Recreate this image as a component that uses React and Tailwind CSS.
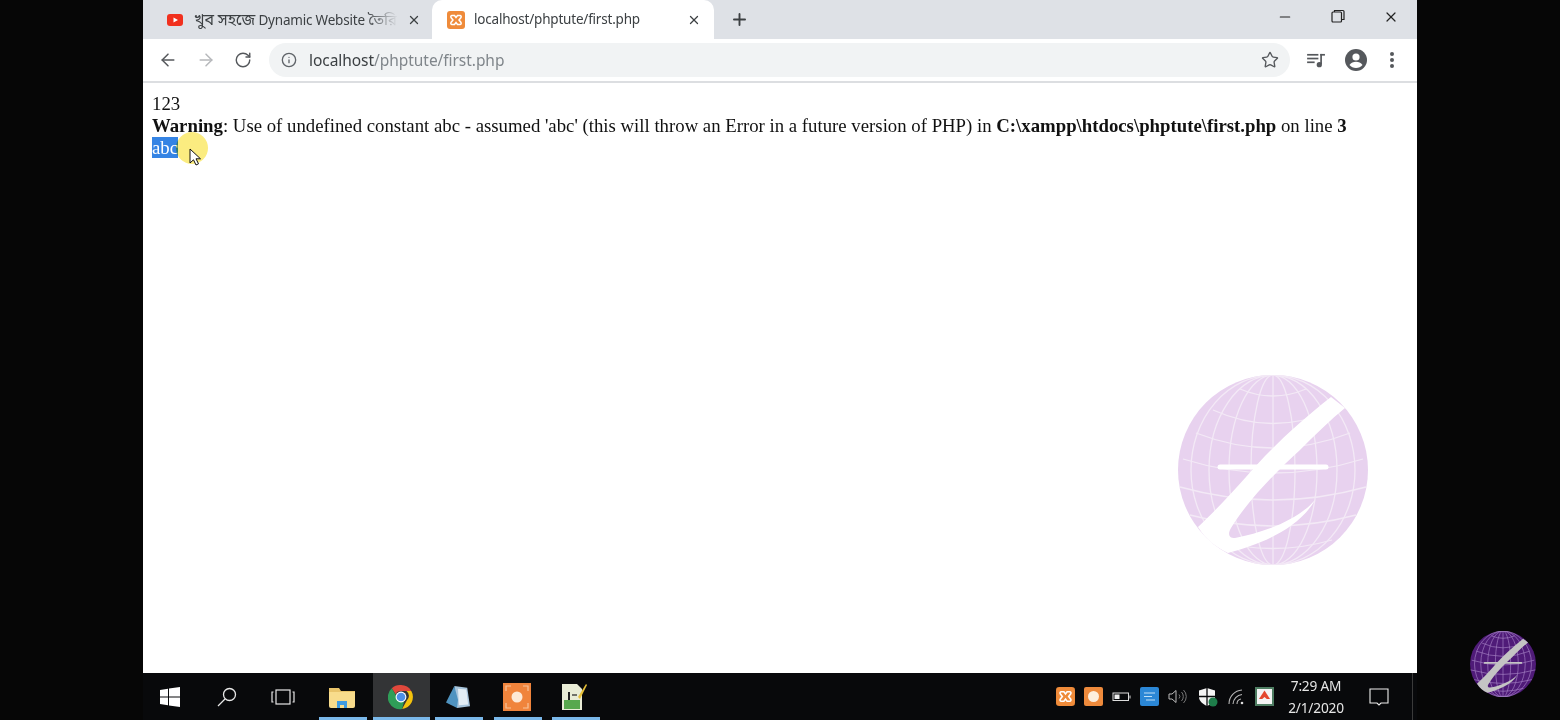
import React from "react";
import { ArrowLeft, ArrowRight, RotateCw, Info, Star, Plus, X, Minus } from "lucide-react";

function Globe({ base, line, swoosh, className, lineWidth }) {
  const parallels = [
    "M35,35 Q95,62 155,35",
    "M18,58 Q95,88 172,58",
    "M5,84 Q95,112 185,84",
    "M2,112 Q95,138 188,112",
    "M12,140 Q95,162 178,140",
    "M36,165 Q95,182 154,165",
    "M62,14 Q95,28 128,14",
  ];
  return (
    <svg viewBox="0 0 190 190" className={className}>
      <circle cx="95" cy="95" r="95" fill={base} />
      <g fill="none" stroke={line} strokeWidth={lineWidth}>
        <line x1="95" y1="0" x2="95" y2="190" />
        <ellipse cx="95" cy="95" rx="22" ry="95" />
        <ellipse cx="95" cy="95" rx="44" ry="95" />
        <ellipse cx="95" cy="95" rx="64" ry="95" />
        <ellipse cx="95" cy="95" rx="82" ry="95" />
        {parallels.map((d) => (
          <path key={d} d={d} />
        ))}
      </g>
      <path
        fill={swoosh}
        d="M153,22 C120,48 90,76 68,102 C50,122 35,138 20,152 C28,165 38,172 50,178 C80,170 120,155 137,125 C120,145 85,158 57,163 C50,163 50,158 53,153 C70,125 100,95 122,75 C137,60 152,45 167,33 Z"
      />
      <line x1="42" y1="92" x2="148" y2="92" stroke={swoosh} strokeWidth="5" strokeLinecap="round" />
    </svg>
  );
}

function Xampp({ className }) {
  return (
    <svg viewBox="0 0 18 18" className={className}>
      <rect width="18" height="18" rx="3" fill="#ef8b3a" />
      <path
        d="M5 4.500h2.500L9 6.500l1.500-2H13c1 0 1.500 1 1 2L12 9l2 2.500c.5 1 0 2-1 2h-2.500L9 11.500l-1.500 2H5c-1 0-1.500-1-1-2L6 9 4 6.500c-.5-1 0-2 1-2z"
        fill="none"
        stroke="#fff"
        strokeWidth="1.500"
      />
    </svg>
  );
}

function OrangeCam({ className }) {
  return (
    <svg viewBox="0 0 28 28" className={className}>
      <rect width="28" height="28" fill="#f0843c" />
      <circle cx="14" cy="14" r="5.500" fill="#fde9d6" />
      <path d="M3 8V3h5M20 3h5v5M25 20v5h-5M8 25H3v-5" fill="none" stroke="#f8c39a" strokeWidth="1.200" />
    </svg>
  );
}

function ChromeLogo({ className }) {
  return (
    <svg viewBox="0 0 48 48" className={className}>
      <path d="M24 2a22 22 0 0 1 19 11H24a11 11 0 0 0-10 6L7 8a22 22 0 0 1 17-6z" fill="#e0483c" />
      <path d="M43 13a22 22 0 0 1-17 33l9-16a11 11 0 0 0-1-17z" fill="#f4c20d" />
      <path d="M26 46A22 22 0 0 1 7 8l10 17a11 11 0 0 0 13 6z" fill="#2f9e58" />
      <circle cx="24" cy="24" r="10" fill="#fff" />
      <circle cx="24" cy="24" r="8" fill="#4d8fe6" />
    </svg>
  );
}

function TaskSlot({ children, active, under, w }) {
  return (
    <div className={`${w} relative h-full flex items-center justify-center shrink-0 ${active ? "bg-[#333436]" : ""}`}>
      {children}
      {under && <div className="absolute bottom-0 left-0 right-0 h-[3px] bg-[#7ab8ea]" />}
    </div>
  );
}

export default function App() {
  const sans = "font-['Noto_Sans','Noto_Sans_Bengali','Liberation_Sans',sans-serif]";
  return (
    <div className="relative w-[1560px] h-[720px] bg-[#060606] flex justify-center overflow-hidden">
      <div className="w-[1274px] h-full flex flex-col">
        {/* tab strip */}
        <div className={`h-[39px] bg-[#dee1e6] flex items-stretch ${sans} text-[#3c4043]`}>
          <div className="w-[289px] flex items-center pl-6 relative">
            <svg viewBox="0 0 16 12" className="w-4 h-3 shrink-0">
              <rect width="16" height="12" rx="3" fill="#f1301e" />
              <path d="M6.500 3.500v5L11 6z" fill="#fff" />
            </svg>
            <div className="relative ml-[11px] w-[204px] overflow-hidden whitespace-nowrap text-[13.500px] tracking-[-0.2px]">
              <span className="text-[16px] leading-[20px]">খুব সহজে</span> Dynamic Website <span className="text-[15px] leading-[20px]">তৈরি</span>
              <div className="absolute inset-y-0 right-0 w-8 bg-gradient-to-r from-transparent to-[#dee1e6]" />
            </div>
            <X className="w-[14px] h-[14px] ml-[9px] shrink-0 text-[#3c4043]" strokeWidth={2.200} />
          </div>
          <div className="w-[282px] bg-white rounded-t-[10px] flex items-center pl-[15px]">
            <Xampp className="w-[18px] h-[18px] shrink-0" />
            <span className="ml-[9px] w-[213px] text-[13.500px] tracking-[-0.2px] whitespace-nowrap">localhost/phptute/first.php</span>
            <X className="w-[14px] h-[14px] shrink-0 text-[#3c4043]" strokeWidth={2.200} />
          </div>
          <div className="w-[50px] flex items-center justify-center">
            <Plus className="w-[19px] h-[19px] text-[#3c4043]" strokeWidth={2.400} />
          </div>
          <div className="flex-1 flex items-start justify-end pr-[18px] pt-[9px] gap-[38px]">
            <Minus className="w-4 h-4 text-[#222]" strokeWidth={1.800} />
            <svg viewBox="0 0 14 14" className="w-[14px] h-[14px]" fill="none" stroke="#222" strokeWidth="1.200">
              <rect x="1" y="3" width="9.500" height="10" rx="1" />
              <path d="M3.500 3V1.500h8.500a1 1 0 0 1 1 1V10.500h-2.500" />
            </svg>
            <X className="w-4 h-4 text-[#222]" strokeWidth={1.800} />
          </div>
        </div>

        {/* toolbar */}
        <div className={`h-[44px] bg-white border-b-2 border-[#dcdee1] flex items-center ${sans} text-[#5f6368]`}>
          <div className="w-[126px] flex items-center pl-[15px] gap-[18px] shrink-0">
            <ArrowLeft className="w-[20px] h-[20px] text-[#55585c]" strokeWidth={1.800} />
            <ArrowRight className="w-[20px] h-[20px] text-[#b6b8bb]" strokeWidth={1.800} />
            <RotateCw className="w-[18px] h-[18px] text-[#55585c]" strokeWidth={1.900} />
          </div>
          <div className="w-[1021px] h-[34px] rounded-full bg-[#f1f3f4] flex items-center pl-[12px] pr-[11px] shrink-0">
            <Info className="w-4 h-4 text-[#5f6368] shrink-0" strokeWidth={2} />
            <span className="ml-[12px] mt-[2px] text-[15.500px] tracking-[-0.05px] whitespace-nowrap">
              <span className="text-[#3c4043]">localhost</span>
              <span className="text-[#80868b]">/phptute/first.php</span>
            </span>
            <Star className="w-[18px] h-[18px] ml-auto text-[#55585c]" strokeWidth={1.800} />
          </div>
          <div className="flex-1 flex items-center pl-[17px] gap-[19px]">
            <svg viewBox="0 0 20 16" className="w-[19px] h-[15px]" fill="#55585c">
              <rect x="0" y="1" width="12" height="1.800" />
              <rect x="0" y="5" width="12" height="1.800" />
              <rect x="0" y="9" width="8" height="1.800" />
              <rect x="14" y="1" width="1.800" height="11" />
              <rect x="14" y="1" width="5" height="1.800" />
              <circle cx="13" cy="12.500" r="2.800" />
            </svg>
            <svg viewBox="0 0 22 22" className="w-[22px] h-[22px]">
              <circle cx="11" cy="11" r="11" fill="#55585c" />
              <circle cx="11" cy="8" r="3.600" fill="#fff" />
              <path d="M4.500 16c1.500-2.500 4-3.300 6.500-3.300s5 .8 6.500 3.300c-1.500 2-4 3-6.500 3s-5-1-6.500-3z" fill="#fff" />
            </svg>
            <div className="flex flex-col gap-[2px] ml-[4px]">
              <div className="w-1 h-1 rounded-full bg-[#55585c]" />
              <div className="w-1 h-1 rounded-full bg-[#55585c]" />
              <div className="w-1 h-1 rounded-full bg-[#55585c]" />
            </div>
          </div>
        </div>

        {/* page */}
        <div className="relative flex-1 bg-white pl-[9px] pt-[10px] font-['Liberation_Serif',serif] text-[18.780px] leading-[22px] text-[#111]">
          <div>123</div>
          <div className="whitespace-nowrap">
            <b>Warning</b>: Use of undefined constant abc - assumed 'abc' (this will throw an Error in a future version of PHP) in <b>C:\xampp\htdocs\phptute\first.php</b> on line <b>3</b>
          </div>
          <div>
            <span className="bg-[#3584e4] text-white">abc</span>
          </div>
          <div className="absolute left-[33px] top-[49px] w-8 h-8 rounded-full bg-[#fbe96a] opacity-85 mix-blend-multiply" />
          <svg viewBox="0 0 12 18" className="absolute left-[46px] top-[65px] w-[12px] h-[18px]">
            <path d="M1 1v14l3.500-3.200L7 17l2.500-1.200-2.500-5h4.500z" fill="#fff" stroke="#111" strokeWidth="1" />
          </svg>
          <Globe base="#e8d2ef" line="#f3e9f6" lineWidth="1.300" swoosh="#ffffff" className="absolute left-[1035px] top-[292px] w-[190px] h-[190px]" />
        </div>

        {/* taskbar */}
        <div className="h-[47px] bg-[#08090b] flex items-stretch shrink-0">
          <TaskSlot w="w-[54px]">
            <svg viewBox="0 0 20 20" className="w-[20px] h-[20px]" fill="#fff">
              <path d="M0 3l8-1.200V9.500H0zM9 1.600L20 0v9.500H9zM0 10.500h8v7.700L0 17zM9 10.500h11V20L9 18.400z" />
            </svg>
          </TaskSlot>
          <TaskSlot w="w-[60px]">
            <svg viewBox="0 0 20 20" className="w-[20px] h-[20px]" fill="none" stroke="#e8e8e8" strokeWidth="1.300">
              <circle cx="12.500" cy="7.500" r="6" />
              <line x1="8" y1="12" x2="1" y2="19" />
            </svg>
          </TaskSlot>
          <TaskSlot w="w-[52px]">
            <svg viewBox="0 0 24 16" className="w-[24px] h-[16px]" fill="none" stroke="#e8e8e8" strokeWidth="1.200">
              <rect x="5" y="1" width="14" height="14" />
              <path d="M2.500 3H1v10h1.500M21.500 3H23v10h-1.500" />
            </svg>
          </TaskSlot>
          <div className="w-[10px]" />
          <TaskSlot w="w-[48px]" under>
            <svg viewBox="0 0 26 22" className="w-[26px] h-[22px] mr-[2px]">
              <path d="M0 2h10l2 3h14v3H0z" fill="#e9c46a" />
              <path d="M0 6h26v14a2 2 0 0 1-2 2H2a2 2 0 0 1-2-2z" fill="#f8dc8c" />
              <path d="M8 22v-7h10v7h-3v-3h-4v3z" fill="#3f9be0" />
            </svg>
          </TaskSlot>
          <div className="w-[6px]" />
          <TaskSlot w="w-[57px]" active under>
            <ChromeLogo className="w-[26px] h-[26px] mr-[2px]" />
          </TaskSlot>
          <div className="w-[5px]" />
          <TaskSlot w="w-[48px]" under>
            <svg viewBox="0 0 28 26" className="w-[26px] h-[24px] mr-[2px]">
              <path d="M10 1l14 2 3 20-14 2z" fill="#a8c5dc" />
              <path d="M10 1L1 19l12 6 1-9z" fill="#4f93c0" />
              <path d="M14 4l9 1 2 16-10 1z" fill="#e3edf4" />
            </svg>
          </TaskSlot>
          <div className="w-[11px]" />
          <TaskSlot w="w-[48px]" under>
            <OrangeCam className="w-[28px] h-[28px] mr-[2px]" />
          </TaskSlot>
          <div className="w-[10px]" />
          <TaskSlot w="w-[48px]" under>
            <svg viewBox="0 0 26 28" className="w-[26px] h-[28px] mr-[4px]">
              <path d="M1 1h15l5 5v21H1z" fill="#e9ecd6" />
              <rect x="3" y="17" width="16" height="9" fill="#58a84e" />
              <rect x="7" y="9" width="2" height="8" fill="#222" />
              <path d="M11 12h5" stroke="#222" strokeWidth="1.200" />
              <path d="M17 14L25 1l1 1-7 14z" fill="#e8c13a" />
            </svg>
          </TaskSlot>

          <div className="flex-1 flex items-center justify-end">
            <div className="flex items-center gap-[9px] mr-[2px]">
              <Xampp className="w-[19px] h-[19px]" />
              <svg viewBox="0 0 19 19" className="w-[19px] h-[19px]">
                <rect width="19" height="19" rx="2" fill="#ee8a3c" />
                <circle cx="9.500" cy="9.500" r="5.500" fill="#fdeedd" />
              </svg>
              <svg viewBox="0 0 19 19" className="w-[19px] h-[19px]" fill="none" stroke="#ddd">
                <rect x="1" y="6" width="15.500" height="7.500" />
                <rect x="2.500" y="7.500" width="5" height="4.500" fill="#eee" stroke="none" />
                <path d="M18 8.500v3" />
              </svg>
              <svg viewBox="0 0 19 19" className="w-[19px] h-[19px]">
                <rect width="19" height="19" rx="2" fill="#2b87d6" />
                <path d="M4 6h11M4 9.500h8M6 13h9" stroke="#bfe0f7" strokeWidth="1.200" />
              </svg>
              <svg viewBox="0 0 19 19" className="w-[19px] h-[19px]" fill="none" stroke="#bbb" strokeWidth="1">
                <path d="M1 7h3l4-3.500v12L4 12H1z" />
                <path d="M11 7.500a3 3 0 0 1 0 4M13.500 5a6.500 6.500 0 0 1 0 9M15.500 3a9 9 0 0 1 0 13" stroke="#777" />
              </svg>
              <svg viewBox="0 0 20 20" className="w-[20px] h-[20px] ml-[2px]">
                <path d="M9 1l8 2.500v6.500c0 4-3.500 7-8 9-4.500-2-8-5-8-9V3.500z" fill="#f4f4f4" />
                <path d="M9 1v18M1 9.500h16" stroke="#08090b" strokeWidth="1.300" />
                <circle cx="15" cy="15" r="4.500" fill="#1e7d4a" />
              </svg>
              <svg viewBox="0 0 19 19" className="w-[19px] h-[19px]" fill="none" stroke="#b5b5b5" strokeWidth="1.100">
                <path d="M2 17A14 14 0 0 1 15 3M6 17A10 10 0 0 1 15 7.500M10 17a5 5 0 0 1 4-5" />
                <circle cx="15" cy="16" r="1.300" fill="#ddd" stroke="none" />
              </svg>
              <svg viewBox="0 0 19 19" className="w-[19px] h-[19px]">
                <rect width="19" height="19" fill="#4e7d62" />
                <rect x="2" y="2" width="15" height="15" fill="#f4f4f4" />
                <path d="M9.500 3.500L15 12H4z" fill="#e4472e" />
                <path d="M9.500 10l5 4.500h-10z" fill="#f4f4f4" />
              </svg>
            </div>
            <div className="w-[80px] text-center font-['Noto_Sans',sans-serif] text-[13.700px] leading-[22px] tracking-[-0.2px] text-[#e6e6e6]">
              <div>7:29 AM</div>
              <div>2/1/2020</div>
            </div>
            <svg viewBox="0 0 20 20" className="w-[20px] h-[20px] ml-[13px]" fill="none" stroke="#eee" strokeWidth="1.100">
              <path d="M1 2h18v14h-7l-2 2-2-2H1z" />
            </svg>
            <div className="w-[1px] h-full bg-[#3a3a3a] ml-[23px]" />
            <div className="w-[4px]" />
          </div>
        </div>
      </div>

      <Globe base="#4f1b78" line="#a17cc0" lineWidth="2" swoosh="#c4c4c4" className="absolute left-[1470px] top-[631px] w-[66px] h-[66px]" />
    </div>
  );
}
